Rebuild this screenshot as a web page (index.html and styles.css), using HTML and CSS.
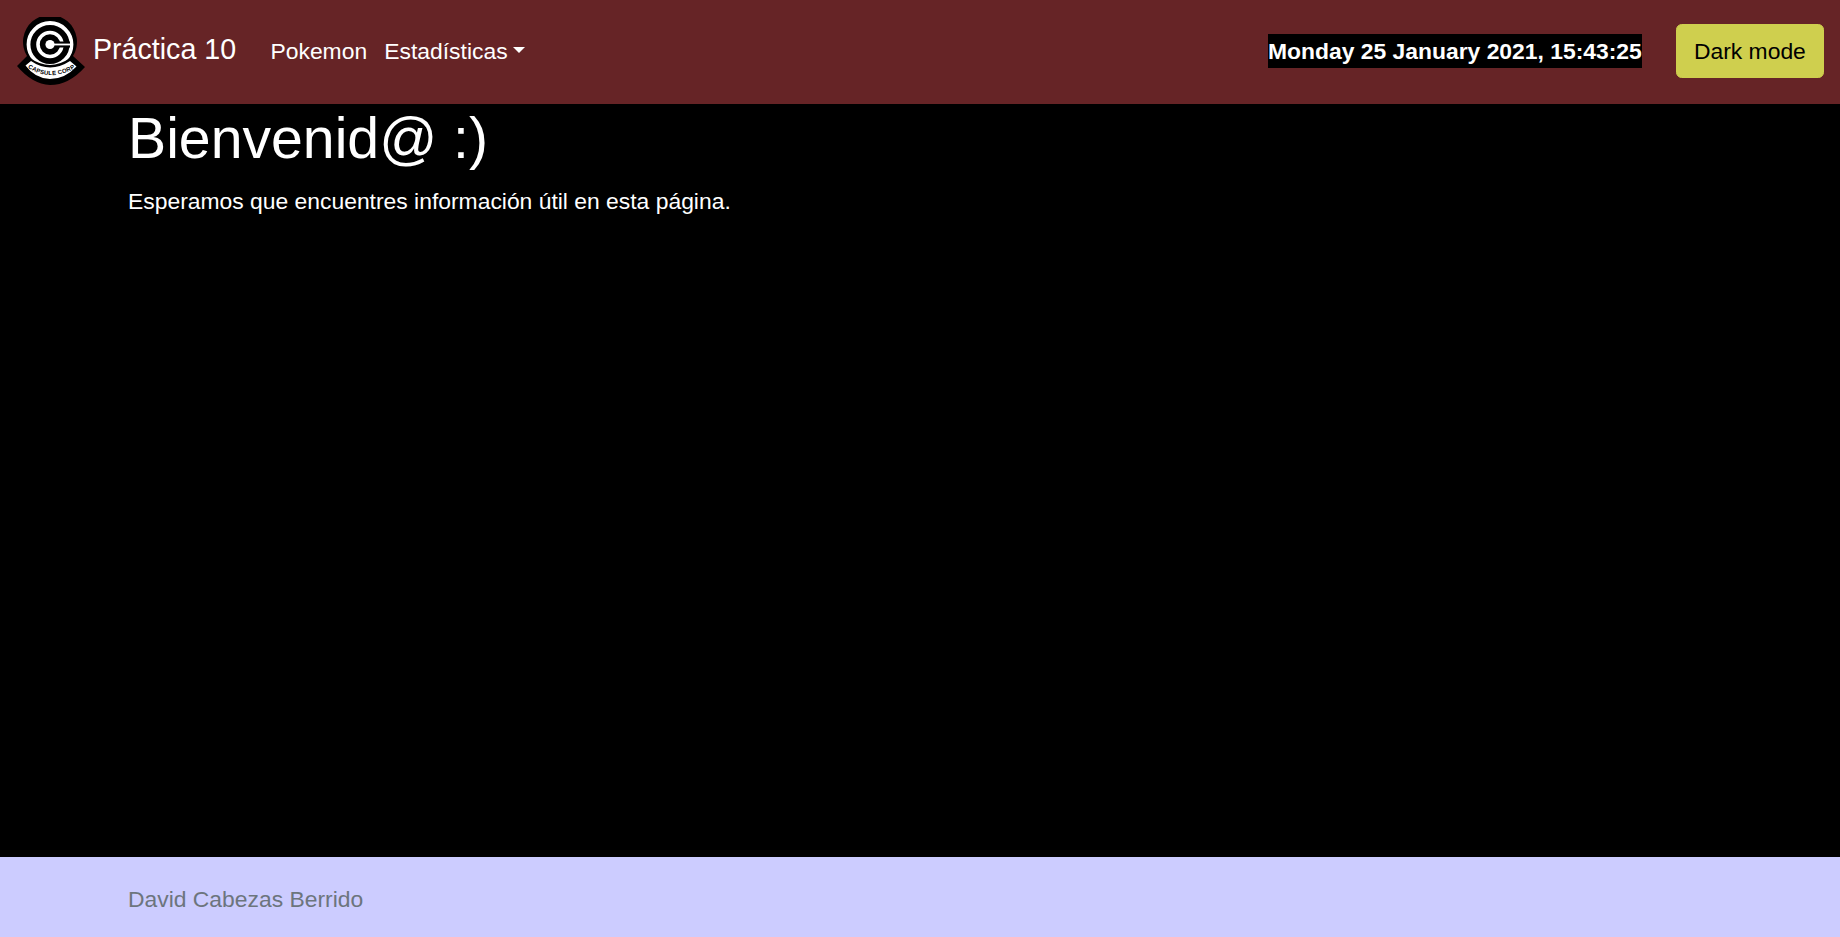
FILE: index.html
```html
<!DOCTYPE html>
<html lang="es">
<head>
  <meta charset="UTF-8" />
  <title>Práctica 10</title>
  <link rel="stylesheet" href="styles.css">
</head>
<body>
  <nav class="navbar">
    <a class="brand" href="#">
      <svg class="logo" viewBox="0 0 68 68" width="68" height="68">
        <path d="M0 49 L10 39 A 27 27 0 1 1 56 39 L68 50 Q 52 68 33 68 Q 15 67 0 49 Z" fill="#000"/>
        <circle cx="33" cy="27.5" r="21.5" fill="none" stroke="#fff" stroke-width="3.8"/>
        <circle cx="33" cy="27.5" r="12" fill="none" stroke="#fff" stroke-width="3.6"/>
        <path d="M33 27.5 H53" stroke="#000" stroke-width="6"/>
        <path d="M33 27.5 H53" stroke="#fff" stroke-width="1.8"/>
        <circle cx="33" cy="27.5" r="4.6" fill="#fff"/>
        <path d="M6 48 L13 41 Q33 55 53 41 L62 49 Q49 66 33 66 Q17 65 6 48 Z" fill="#000"/>
        <path d="M8.5 48.5 L14 44 Q33 57 53 44 L59.5 49.5 Q48 62 33 62 Q18 61.5 8.5 48.5 Z" fill="#fff"/>
        <path id="logoArc" d="M9 49.5 Q33 66.5 60 50" fill="none"/>
        <text class="logo-text"><textPath href="#logoArc" startOffset="50%" text-anchor="middle">CAPSULE CORP</textPath></text>
      </svg>
      <span class="brand-name">Práctica 10</span>
    </a>
    <ul class="nav-links">
      <li><a href="#">Pokemon</a></li>
      <li><a class="dropdown" href="#">Estadísticas</a></li>
    </ul>
    <div class="nav-right">
      <span class="clock">Monday 25 January 2021, 15:43:25</span>
      <button class="mode-btn">Dark mode</button>
    </div>
  </nav>

  <main class="content">
    <h1>Bienvenid@ :)</h1>
    <p>Esperamos que encuentres información útil en esta página.</p>
  </main>

  <footer class="footer">
    <span>David Cabezas Berrido</span>
  </footer>
</body>
</html>
```

FILE: styles.css
```css
* {
  box-sizing: border-box;
}
html, body {
  height: 100%;
}
body {
  margin: 0;
  display: flex;
  flex-direction: column;
  background-color: #000;
  color: #fff;
  font-family: "Liberation Sans", Arial, sans-serif;
  font-size: 22.88px;
  line-height: 1.5;
}
a {
  color: inherit;
  text-decoration: none;
}
.navbar {
  display: flex;
  align-items: center;
  height: 104px;
  padding: 0 16px 2px 17px;
  background-color: #662426;
}
.brand {
  display: flex;
  align-items: center;
  margin-right: 23px;
  font-size: 28.6px;
}
.logo {
  margin-right: 8px;
}
.brand-name {
  padding-bottom: 3px;
}
.logo-text {
  font-size: 6px;
  font-weight: bold;
  letter-spacing: 0.2px;
  fill: #000;
}
.nav-links {
  display: flex;
  margin: 0;
  padding: 0;
  list-style: none;
}
.nav-links a {
  display: block;
  padding: 0 5.7px 0 11.44px;
}
.dropdown::after {
  content: "";
  display: inline-block;
  margin-left: 5.8px;
  vertical-align: 5.8px;
  border-top: 6.9px solid;
  border-left: 6.9px solid transparent;
  border-right: 6.9px solid transparent;
  border-bottom: 0;
}
.nav-right {
  display: flex;
  align-items: center;
  margin-left: auto;
}
.clock {
  margin-right: 34px;
  background-color: #000;
  font-weight: bold;
}
.mode-btn {
  height: 54px;
  padding: 0 17.16px;
  border: 1px solid #cfcf4e;
  border-radius: 5.7px;
  background-color: #cfcf4e;
  color: #000;
  font: inherit;
}
.content {
  flex: 1;
  padding: 0 128px;
}
.content h1 {
  margin: 0 0 11.44px;
  font-size: 57.2px;
  font-weight: 400;
  line-height: 1.2;
}
.content p {
  margin: 0;
}
.footer {
  display: flex;
  align-items: center;
  height: 80px;
  padding: 5px 128px 0;
  background-color: #ccccff;
  color: #6c757d;
}
```
